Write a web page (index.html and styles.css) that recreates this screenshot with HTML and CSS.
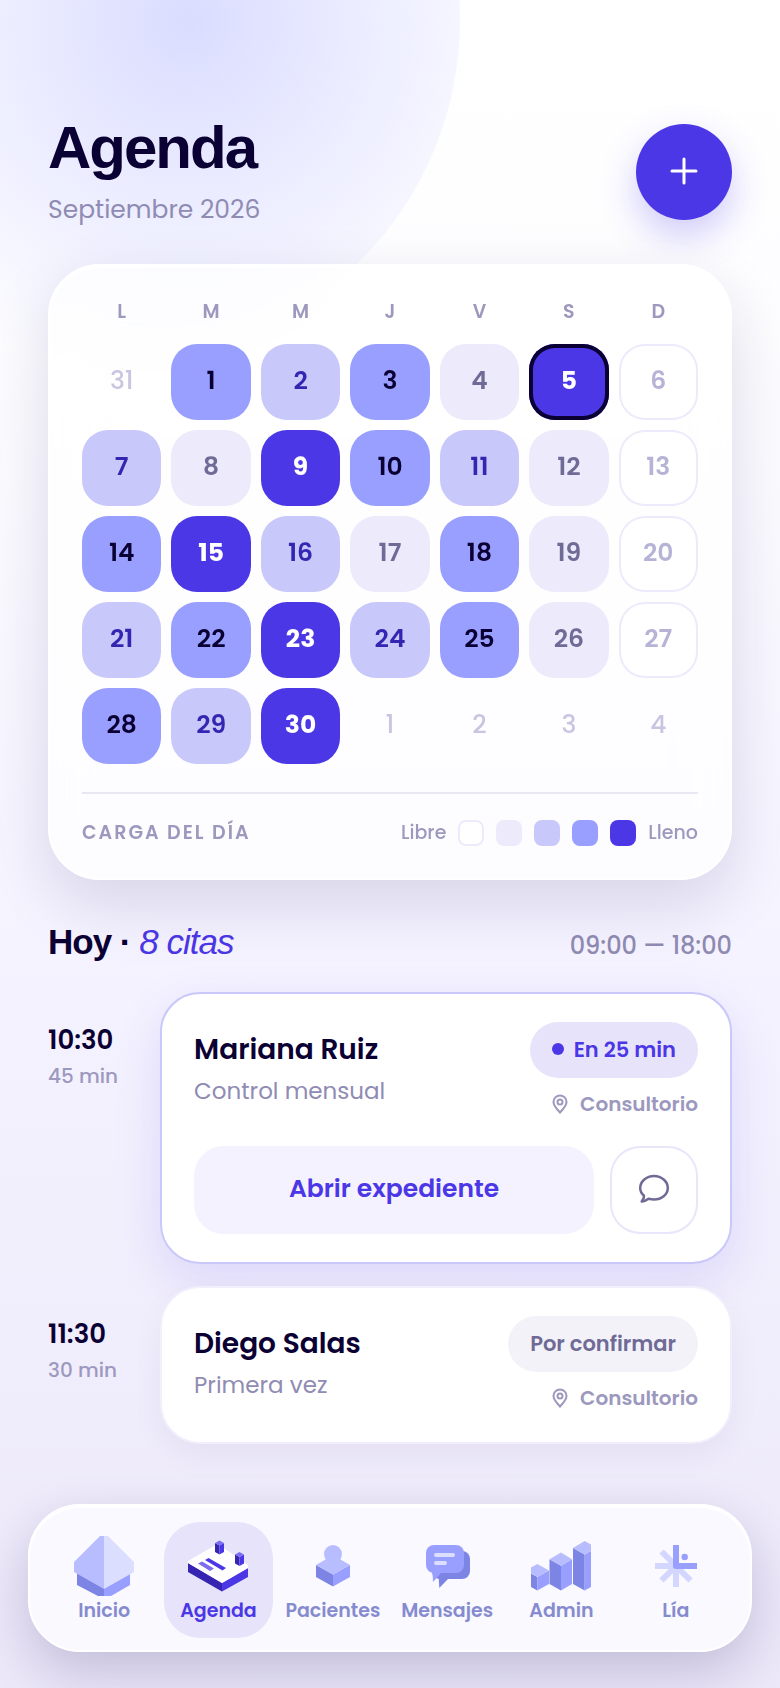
FILE: index.html
```html
<!DOCTYPE html>
<html lang="es">
<head>
    <meta charset="UTF-8">
    <meta name="viewport" content="width=device-width, initial-scale=1.0">
    <title>Agenda</title>
    <link rel="stylesheet" href="styles.css">
</head>
<body>

    <div class="header">
        <div>
            <h1>Agenda</h1>
            <p>Septiembre 2026</p>
        </div>
        <button class="add" type="button" aria-label="Nueva cita">
            <svg width="32" height="32" viewBox="0 0 32 32"><path d="M16 4v24M4 16h24"/></svg>
        </button>
    </div>

    <div class="calendar">
        <div class="days-of-week">
            <div>L</div>
            <div>M</div>
            <div>M</div>
            <div>J</div>
            <div>V</div>
            <div>S</div>
            <div>D</div>
        </div>
        <div class="days">
            <button type="button" class="outside">31</button>
            <button type="button" class="load-3">1</button>
            <button type="button" class="load-2">2</button>
            <button type="button" class="load-3">3</button>
            <button type="button" class="load-1">4</button>
            <button type="button" class="load-4 today">5</button>
            <button type="button" class="load-0">6</button>

            <button type="button" class="load-2">7</button>
            <button type="button" class="load-1">8</button>
            <button type="button" class="load-4">9</button>
            <button type="button" class="load-3">10</button>
            <button type="button" class="load-2">11</button>
            <button type="button" class="load-1">12</button>
            <button type="button" class="load-0">13</button>

            <button type="button" class="load-3">14</button>
            <button type="button" class="load-4">15</button>
            <button type="button" class="load-2">16</button>
            <button type="button" class="load-1">17</button>
            <button type="button" class="load-3">18</button>
            <button type="button" class="load-1">19</button>
            <button type="button" class="load-0">20</button>

            <button type="button" class="load-2">21</button>
            <button type="button" class="load-3">22</button>
            <button type="button" class="load-4">23</button>
            <button type="button" class="load-2">24</button>
            <button type="button" class="load-3">25</button>
            <button type="button" class="load-1">26</button>
            <button type="button" class="load-0">27</button>

            <button type="button" class="load-3">28</button>
            <button type="button" class="load-2">29</button>
            <button type="button" class="load-4">30</button>
            <button type="button" class="outside">1</button>
            <button type="button" class="outside">2</button>
            <button type="button" class="outside">3</button>
            <button type="button" class="outside">4</button>
        </div>
        <div class="legend">
            <span class="legend-title">CARGA DEL DÍA</span>
            <div class="legend-scale">
                <span>Libre</span>
                <i class="load-0"></i>
                <i class="load-1"></i>
                <i class="load-2"></i>
                <i class="load-3"></i>
                <i class="load-4"></i>
                <span>Lleno</span>
            </div>
        </div>
    </div>

    <div class="today-title">
        <h2>Hoy · <em>8 citas</em></h2>
        <span>09:00 — 18:00</span>
    </div>

    <div class="appointments">
        <div class="appointment">
            <div class="time">
                <strong>10:30</strong>
                <span>45 min</span>
            </div>
            <div class="card next">
                <div class="card-top">
                    <div class="patient">
                        <h3>Mariana Ruiz</h3>
                        <p>Control mensual</p>
                    </div>
                    <div class="status">
                        <span class="pill soon"><i class="dot"></i>En 25 min</span>
                        <span class="place">
                            <svg width="20" height="20" viewBox="0 0 20 20"><path d="M10 18.500C7.500 15.500 3.500 12 3.500 8a6.500 6.500 0 0 1 13 0c0 4-4 7.500-6.500 10.500z"/><circle cx="10" cy="8" r="2.500"/></svg>
                            Consultorio
                        </span>
                    </div>
                </div>
                <div class="actions">
                    <button type="button" class="open">Abrir expediente</button>
                    <button type="button" class="chat" aria-label="Enviar mensaje">
                        <svg width="32" height="32" viewBox="0 0 32 32"><path d="M16 3C8.500 3 2.200 8.300 2.200 15c0 3 1.300 5.600 3.700 7.500.4 2-.4 3.500-2.200 6 2.500.3 4.500-1 6.800-2.700 1.700.4 3.500.7 5.500.7 7.500 0 13.800-4.800 13.800-11.500S23.500 3 16 3z"/></svg>
                    </button>
                </div>
            </div>
        </div>

        <div class="appointment">
            <div class="time">
                <strong>11:30</strong>
                <span>30 min</span>
            </div>
            <div class="card">
                <div class="card-top">
                    <div class="patient">
                        <h3>Diego Salas</h3>
                        <p>Primera vez</p>
                    </div>
                    <div class="status">
                        <span class="pill">Por confirmar</span>
                        <span class="place">
                            <svg width="20" height="20" viewBox="0 0 20 20"><path d="M10 18.500C7.500 15.500 3.500 12 3.500 8a6.500 6.500 0 0 1 13 0c0 4-4 7.500-6.500 10.500z"/><circle cx="10" cy="8" r="2.500"/></svg>
                            Consultorio
                        </span>
                    </div>
                </div>
            </div>
        </div>
    </div>

    <nav class="navbar">
        <a href="#inicio">
            <svg width="60" height="60" viewBox="0 0 60 60">
                <path fill="#7c84e4" d="M3 37l27 15v8h-6L3 49z"/>
                <path fill="#999fff" d="M56 37L30 52v8h7l19-11z"/>
                <path fill="#b8bdff" d="M26 0h4v53L0 36V26z"/>
                <path fill="#dcdeff" d="M30 0h4l26 26v10L30 53z"/>
            </svg>
            Inicio
        </a>
        <a href="#agenda" class="active">
            <svg width="60" height="60" viewBox="0 0 60 60">
                <path fill="#3525b0" d="M0 27l34 20v8.500L0 36z"/>
                <path fill="#4b37e6" d="M60 32L34 47v8.500L60 41z"/>
                <path fill="#fff" d="M0 25l26-15h7l27 19v3L34 47 0 27z"/>
                <path fill="#4b37e6" d="M17 24l3.500-2L38 32l-3.500 2.500z"/>
                <path fill="#7b6cf2" d="M10 27.500l4-2 12 7-4 2.500z"/>
                <path fill="#3525b0" d="M27 7l4.500 2.500v9L27 16zM47 18.500l4.500 2.500v9L47 27.500z"/>
                <path fill="#4b37e6" d="M36 7l-4.500 2.500v9L36 16zM56 18.500L51.500 21v9l4.500-2.500z"/>
                <path fill="#7b6cf2" d="M31.500 4.500L36 7l-4.500 2.500L27 7zM51.500 16l4.500 2.500-4.500 2.500-4.500-2.500z"/>
            </svg>
            Agenda
        </a>
        <a href="#pacientes">
            <svg width="60" height="60" viewBox="0 0 60 60">
                <path fill="#7c84e4" d="M13 29l17 9.500v12L13 41z"/>
                <path fill="#999fff" d="M47 29l-17 9.500v12L47 41z"/>
                <path fill="#b8bdff" d="M13 29l9.500-5.500V20h15v3.500L47 29l-17 9.500z"/>
                <circle fill="#b8bdff" cx="30" cy="18" r="9"/>
            </svg>
            Pacientes
        </a>
        <a href="#mensajes">
            <svg width="60" height="60" viewBox="0 0 60 60">
                <rect fill="#7c84e4" x="15" y="15" width="38" height="28" rx="8"/>
                <path fill="#7c84e4" d="M21.500 38l.8 14L32 42z"/>
                <rect fill="#999fff" x="9" y="9" width="38" height="28" rx="8"/>
                <path fill="#999fff" d="M14 34c1.500 3 2 6 2 12l9-10z"/>
                <rect fill="#dcdeff" x="17" y="17" width="21" height="4" rx="2"/>
                <rect fill="#dcdeff" x="17" y="25" width="13" height="4" rx="2"/>
            </svg>
            Mensajes
        </a>
        <a href="#admin">
            <svg width="60" height="60" viewBox="0 0 60 60">
                <path fill="#7c84e4" d="M0 37.500L6.300 41v13.500L0 51zM18.500 23.300L30 29.700v24.800L18.500 48zM42 12l11.700 6.500v36L42 48z"/>
                <path fill="#999fff" d="M18 34.500L6.300 41v13.500L18 48zM41 23.300l-11 6.400v24.800L41 48zM60 15l-6.300 3.500v36L60 51z"/>
                <path fill="#b8bdff" d="M0 31.500L6.300 28 18 34.500 6.300 41 0 37.500zM30 16.500l11 6.800-11 6.400-11.500-6.400zM42 12l11.700-7L60 8.500V15l-6.300 3.500z"/>
            </svg>
            Admin
        </a>
        <a href="#lia">
            <svg width="60" height="60" viewBox="0 0 60 60" fill="none" stroke-width="6">
                <path stroke="#d3d6ff" d="M30 30L15.500 15.500M30 30H9M30 30L15.500 44.500M30 30v21M30 30l14.500 14.500"/>
                <path stroke="#999fff" stroke-linejoin="round" d="M30 9v21h21"/>
                <circle fill="#999fff" cx="38.700" cy="21" r="3.200"/>
            </svg>
            Lía
        </a>
    </nav>

</body>
</html>
```
FILE: styles.css
```css
* {
    box-sizing: border-box;
}
body {
    font-family: Poppins, Inter, sans-serif;
    margin: 0;
    padding: 124px 48px 36px;
    min-height: 100vh;
    display: flex;
    flex-direction: column;
    position: relative;
    overflow-x: hidden;
    color: #0b0033;
    background: linear-gradient(180deg, #ffffff 0%, #fdfdff 20%, #f5f3ff 56%, #ece8f9 100%);
}
/* soft circle behind the header */
body::before {
    content: "";
    position: absolute;
    left: -220px;
    top: -320px;
    width: 680px;
    height: 680px;
    border-radius: 50%;
    background: radial-gradient(circle at 60% 50%, rgba(153, 159, 255, 0.36), rgba(153, 159, 255, 0) 70%);
    z-index: -1;
}
h1, h2, h3, p {
    margin: 0;
}
button {
    font-family: inherit;
    border: none;
    padding: 0 0 2px;
    cursor: pointer;
}
svg {
    display: block;
}

.header {
    display: flex;
    justify-content: space-between;
    align-items: flex-start;
    height: 96px;
    margin-bottom: 44px;
}
.header h1 {
    font-family: "Liberation Sans", Arial, sans-serif;
    font-size: 60px;
    line-height: 48px;
    letter-spacing: -2px;
}
.header p {
    font-size: 25px;
    line-height: 40px;
    margin-top: 18px;
    color: #8f8bb3;
}
.add {
    width: 96px;
    height: 96px;
    border-radius: 50%;
    background: #4b37e6;
    display: flex;
    align-items: center;
    justify-content: center;
    box-shadow: 0 16px 36px rgba(75, 55, 230, 0.26);
}
.add path {
    stroke: #ffffff;
    stroke-width: 3;
    stroke-linecap: round;
}

.calendar {
    padding: 32px;
    border: 2px solid #ffffff;
    border-radius: 52px;
    background: rgba(255, 255, 255, 0.76);
    box-shadow: 0 24px 64px rgba(30, 15, 90, 0.14), inset 0 2px 0 #ffffff;
    backdrop-filter: blur(24px);
}
.days-of-week, .days {
    display: grid;
    grid-template-columns: repeat(7, 1fr);
    gap: 10px;
}
.days-of-week div {
    text-align: center;
    font-size: 19px;
    font-weight: 600;
    line-height: 28px;
    margin-bottom: 18px;
    color: #9c98be;
}
.days button {
    height: 76px;
    border-radius: 26px;
    font-size: 25px;
    font-weight: 600;
}
.outside {
    background: none;
    color: #c9c5e0;
}
.days .outside {
    font-weight: 500;
}
.load-0 {
    background: #ffffff;
    box-shadow: inset 0 0 0 2px #edeafc;
    color: #b7b3d6;
}
.load-1 {
    background: #edeafb;
    color: #6f6a96;
}
.load-2 {
    background: #c9c8fa;
    color: #3525b0;
}
.load-3 {
    background: #999fff;
    color: #0b0033;
}
.load-4 {
    background: #4b37e6;
    color: #ffffff;
}
.today {
    box-shadow: inset 0 0 0 4px #0b0033;
}
.days .load-4 {
    font-weight: 700;
}
.legend {
    display: flex;
    justify-content: space-between;
    align-items: center;
    margin-top: 28px;
    padding-top: 26px;
    border-top: 2px solid #e9e7f2;
    font-size: 19px;
    line-height: 26px;
    font-weight: 500;
    color: #9c98be;
}
.legend-title {
    font-weight: 600;
    letter-spacing: 2px;
}
.legend-scale {
    display: flex;
    gap: 12px;
}
.legend-scale i {
    width: 26px;
    height: 26px;
    border-radius: 8px;
}

.today-title {
    display: flex;
    justify-content: space-between;
    align-items: baseline;
    margin: 40px 0 28px;
}
.today-title h2 {
    font-family: "Liberation Sans", Arial, sans-serif;
    font-size: 35px;
    line-height: 44px;
    letter-spacing: -1px;
}
.today-title em {
    font-weight: 400;
    color: #4b37e6;
}
.today-title span {
    font-size: 24px;
    line-height: 28px;
    font-weight: 500;
    color: #8f8bb3;
}

.appointments {
    display: flex;
    flex-direction: column;
    gap: 22px;
    margin-bottom: 60px;
}
.appointment {
    display: flex;
}
.time {
    flex: 0 0 112px;
    padding-top: 30px;
}
.time strong, .time span {
    display: block;
}
.time strong {
    font-size: 26px;
    font-weight: 600;
    line-height: 36px;
}
.time span {
    font-size: 20px;
    font-weight: 500;
    line-height: 36px;
    color: #9c98be;
}
.card {
    flex: 1;
    padding: 28px 32px;
    border: 2px solid #f1effc;
    border-radius: 40px;
    background: #ffffff;
    box-shadow: 0 12px 32px rgba(30, 15, 90, 0.05);
}
.next {
    border-color: #c9c8fa;
    box-shadow: 0 16px 48px rgba(75, 55, 230, 0.13);
}
.card-top {
    display: flex;
    justify-content: space-between;
    height: 98px;
}
.patient h3 {
    font-size: 28px;
    font-weight: 600;
    line-height: 40px;
    margin-top: 8px;
}
.patient p {
    font-size: 23px;
    line-height: 42px;
    color: #8f8bb3;
}
.status {
    display: flex;
    flex-direction: column;
    align-items: flex-end;
    gap: 12px;
}
.pill {
    display: flex;
    align-items: center;
    gap: 10px;
    height: 56px;
    padding: 0 22px 2px;
    border-radius: 28px;
    background: #f3f2f9;
    color: #6f6a96;
    font-size: 21px;
    font-weight: 600;
}
.soon {
    background: #e7e3fb;
    color: #4b37e6;
}
.dot {
    width: 12px;
    height: 12px;
    border-radius: 50%;
    background: #4b37e6;
}
.place {
    display: flex;
    align-items: center;
    gap: 10px;
    font-size: 20px;
    font-weight: 600;
    line-height: 28px;
    color: #9c98be;
}
.place svg {
    fill: none;
    stroke: #9c98be;
    stroke-width: 2;
}
.actions {
    display: flex;
    gap: 16px;
    margin-top: 26px;
}
.actions button {
    height: 88px;
    border-radius: 30px;
}
.open {
    flex: 1;
    background: #f4f2ff;
    color: #4b37e6;
    font-size: 25px;
    font-weight: 600;
}
.chat {
    flex: 0 0 88px;
    display: flex;
    align-items: center;
    justify-content: center;
    background: #ffffff;
    box-shadow: inset 0 0 0 2px #e9e6fb;
}
.chat path {
    fill: none;
    stroke: #6f6a96;
    stroke-width: 2.500;
    stroke-linejoin: round;
}

.navbar {
    display: flex;
    gap: 6px;
    margin: auto -20px 0;
    padding: 16px 20px 12px;
    border: 2px solid #ffffff;
    border-radius: 52px;
    background: rgba(252, 251, 255, 0.84);
    box-shadow: 0 20px 52px rgba(30, 15, 90, 0.2), inset 0 2px 0 #ffffff;
}
.navbar a {
    flex: 1 1 0;
    min-width: 0;
    display: flex;
    flex-direction: column;
    align-items: center;
    height: 116px;
    padding-top: 14px;
    border-radius: 36px;
    color: #868bd0;
    font-size: 19px;
    font-weight: 600;
    line-height: 30px;
    text-decoration: none;
}
.navbar .active {
    background: #e6e3fb;
    color: #4b37e6;
}
```
